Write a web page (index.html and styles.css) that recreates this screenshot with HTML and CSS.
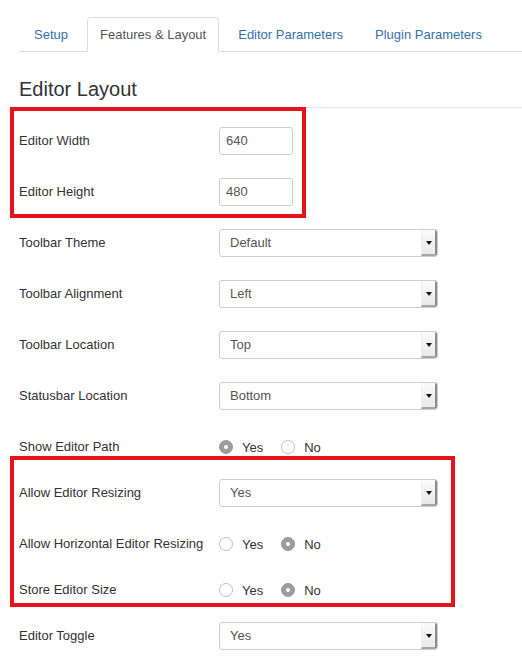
FILE: index.html
```html
<!DOCTYPE html>
<html>
<head>
<meta charset="utf-8">
<link rel="stylesheet" href="styles.css">
</head>
<body>
<div class="page">
  <ul class="tabs">
    <li class="tab"><a>Setup</a></li>
    <li class="tab active"><a>Features &amp; Layout</a></li>
    <li class="tab"><a>Editor Parameters</a></li>
    <li class="tab"><a>Plugin Parameters</a></li>
  </ul>

  <h2 class="section-title">Editor Layout</h2>

  <div class="form">
    <div class="row row-field">
      <div class="label">Editor Width</div>
      <div class="input">640</div>
    </div>
    <div class="row row-field">
      <div class="label">Editor Height</div>
      <div class="input">480</div>
    </div>
    <div class="row row-field">
      <div class="label">Toolbar Theme</div>
      <div class="select"><span class="value">Default</span><span class="arrow"><i></i></span></div>
    </div>
    <div class="row row-field">
      <div class="label">Toolbar Alignment</div>
      <div class="select"><span class="value">Left</span><span class="arrow"><i></i></span></div>
    </div>
    <div class="row row-field">
      <div class="label">Toolbar Location</div>
      <div class="select"><span class="value">Top</span><span class="arrow"><i></i></span></div>
    </div>
    <div class="row row-field">
      <div class="label">Statusbar Location</div>
      <div class="select"><span class="value">Bottom</span><span class="arrow"><i></i></span></div>
    </div>
    <div class="row row-radio">
      <div class="label">Show Editor Path</div>
      <div class="radios">
        <span class="radio checked"></span><span class="opt">Yes</span>
        <span class="radio"></span><span class="opt">No</span>
      </div>
    </div>
    <div class="row row-field">
      <div class="label">Allow Editor Resizing</div>
      <div class="select"><span class="value">Yes</span><span class="arrow"><i></i></span></div>
    </div>
    <div class="row row-radio">
      <div class="label">Allow Horizontal Editor Resizing</div>
      <div class="radios">
        <span class="radio"></span><span class="opt">Yes</span>
        <span class="radio checked"></span><span class="opt">No</span>
      </div>
    </div>
    <div class="row row-radio">
      <div class="label">Store Editor Size</div>
      <div class="radios">
        <span class="radio"></span><span class="opt">Yes</span>
        <span class="radio checked"></span><span class="opt">No</span>
      </div>
    </div>
    <div class="row row-field">
      <div class="label">Editor Toggle</div>
      <div class="select"><span class="value">Yes</span><span class="arrow"><i></i></span></div>
    </div>
  </div>

  <div class="mark mark-size"></div>
  <div class="mark mark-resize"></div>
</div>
</body>
</html>
```

FILE: styles.css
```css
html, body {
  margin: 0;
  padding: 0;
  background: #ffffff;
}

body {
  font-family: "Liberation Sans", Arial, sans-serif;
  font-size: 13px;
  color: #333333;
}

.page {
  position: relative;
  width: 522px;
  height: 670px;
  overflow: hidden;
}

/* Tabs */
.tabs {
  list-style: none;
  margin: 17px 0 0 19px;
  padding: 0 0 0 2px;
  display: flex;
  border-bottom: 1px solid #dddddd;
}

.tab {
  margin-right: 6px;
  margin-bottom: -1px;
}

.tab a {
  display: block;
  padding: 0 12px;
  line-height: 33px;
  border: 1px solid transparent;
  border-radius: 4px 4px 0 0;
  color: #3470ad;
  font-size: 13px;
}

.tab.active a {
  color: #555555;
  background: #ffffff;
  border-color: #dddddd #dddddd transparent;
}

/* Heading */
.section-title {
  margin: 27px 0 0 19px;
  padding: 0 0 8px 0;
  font-size: 20px;
  line-height: 20px;
  font-weight: normal;
  color: #333333;
  border-bottom: 1px solid #e5e5e5;
}

/* Form */
.form {
  padding: 19px 0 0 19px;
}

.row {
  display: flex;
  align-items: flex-start;
  margin-bottom: 18px;
}

.row-field {
  height: 33px;
}

.row-radio {
  height: 28px;
}

.label {
  width: 200px;
  line-height: 28px;
  color: #333333;
  white-space: nowrap;
}

.input {
  box-sizing: border-box;
  width: 74px;
  height: 28px;
  padding: 0 6px;
  line-height: 26px;
  border: 1px solid #cccccc;
  border-radius: 3px;
  color: #555555;
}

.select {
  box-sizing: border-box;
  width: 219px;
  height: 28px;
  display: flex;
  border: 1px solid #cccccc;
  border-radius: 3px;
  color: #555555;
  overflow: hidden;
}

.select .value {
  flex: 1;
  padding-left: 10px;
  line-height: 26px;
}

.select .arrow {
  box-sizing: border-box;
  width: 16px;
  height: 26px;
  display: flex;
  align-items: center;
  justify-content: center;
  background: linear-gradient(#fbfbfb, #e9e9e9);
  border-left: 1px solid #eeeeee;
  border-right: 2px solid #8c8c8c;
  border-bottom: 2px solid #a5a5a5;
  border-radius: 0 2px 2px 0;
}

.select .arrow i {
  display: block;
  width: 0;
  height: 0;
  border-left: 3px solid transparent;
  border-right: 3px solid transparent;
  border-top: 4px solid #111111;
  margin-top: 1px;
}

/* Radios */
.radios {
  display: flex;
  align-items: center;
  height: 28px;
}

.radio {
  box-sizing: border-box;
  width: 14px;
  height: 14px;
  border-radius: 50%;
  border: 1px solid #bdbdbd;
  background: #ffffff;
  position: relative;
}

.radio.checked {
  border-color: #9a9a9a;
  background: #9d9d9d;
}

.radio.checked::after {
  content: "";
  position: absolute;
  left: 4px;
  top: 4px;
  width: 4px;
  height: 4px;
  border-radius: 50%;
  background: #ffffff;
}

.opt {
  margin-left: 9px;
  margin-right: 18px;
  color: #333333;
}

/* Red annotation boxes */
.mark {
  position: absolute;
  box-sizing: border-box;
  border: 4px solid #e8121b;
  pointer-events: none;
}

.mark-size {
  left: 10px;
  top: 107px;
  width: 296px;
  height: 111px;
}

.mark-resize {
  left: 10px;
  top: 456px;
  width: 445px;
  height: 151px;
}
```
